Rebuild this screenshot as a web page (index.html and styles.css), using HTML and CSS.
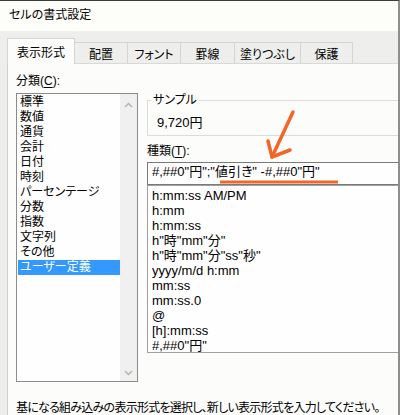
FILE: index.html
```html
<!DOCTYPE html>
<html lang="ja">
<head>
<meta charset="utf-8">
<title>セルの書式設定</title>
<link rel="stylesheet" href="styles.css">
</head>
<body>
<div class="window">
  <div class="titlebar">セルの書式設定</div>
  <div class="body">
    <div class="tabs">
      <div class="tab active t1">表示形式</div>
      <div class="tab t2">配置</div>
      <div class="tab t3">フォント</div>
      <div class="tab t4">罫線</div>
      <div class="tab t5">塗りつぶし</div>
      <div class="tab t6">保護</div>
    </div>
    <div class="panel">
      <div class="cols">
        <div class="left">
          <div class="label">分類(<u>C</u>):</div>
          <div class="listbox">
            <ul class="cats">
              <li>標準</li>
              <li>数値</li>
              <li>通貨</li>
              <li>会計</li>
              <li>日付</li>
              <li>時刻</li>
              <li>パーセンテージ</li>
              <li>分数</li>
              <li>指数</li>
              <li>文字列</li>
              <li>その他</li>
              <li class="selected">ユーザー定義</li>
            </ul>
            <div class="scrollbar">
              <svg class="chev" width="9" height="6" viewBox="0 0 9 6"><polyline points="1,5 4.5,1.5 8,5" fill="none" stroke="#b4b4b4" stroke-width="1.5"/></svg>
              <svg class="chev" width="9" height="6" viewBox="0 0 9 6"><polyline points="1,1 4.5,4.5 8,1" fill="none" stroke="#b4b4b4" stroke-width="1.5"/></svg>
            </div>
          </div>
        </div>
        <div class="right">
          <fieldset class="sample">
            <legend>サンプル</legend>
            <div class="sample-value">9,720円</div>
          </fieldset>
          <div class="label kind">種類(<u>T</u>):</div>
          <div class="input">#,##0"円";"値引き" -#,##0"円"</div>
          <ul class="formats">
            <li>h:mm:ss AM/PM</li>
            <li>h:mm</li>
            <li>h:mm:ss</li>
            <li>h"時"mm"分"</li>
            <li>h"時"mm"分"ss"秒"</li>
            <li>yyyy/m/d h:mm</li>
            <li>mm:ss</li>
            <li>mm:ss.0</li>
            <li>@</li>
            <li>[h]:mm:ss</li>
            <li>#,##0"円"</li>
          </ul>
        </div>
      </div>
      <p class="hint">基になる組み込みの表示形式を選択し、新しい表示形式を入力してください。</p>
    </div>
  </div>
  <svg class="annot" width="400" height="415" viewBox="0 0 400 415">
    <g stroke="#f0672a" stroke-width="3.5" fill="none" stroke-linecap="round" stroke-linejoin="round">
      <line x1="293" y1="112" x2="272" y2="157"/>
      <polyline points="268,141 272,157 290,150"/>
      <line x1="220" y1="182" x2="338" y2="182" stroke-width="3" stroke-linecap="butt"/>
    </g>
  </svg>
</div>
</body>
</html>
```

FILE: styles.css
```css
* { box-sizing: border-box; }
html, body { margin: 0; padding: 0; }
body {
  font-family: "Liberation Sans", "Noto Sans CJK JP", sans-serif;
  font-feature-settings: "palt";
  color: #000;
  background: #eeefec;
}
.window {
  position: relative;
  width: 400px;
  height: 415px;
  overflow: hidden;
  border-top: 1px solid #3c3c3c;
  border-right: 2px solid #8e8e8e;
  background: #eeefec;
}
.titlebar {
  height: 30px;
  background: #fdfdfa;
  padding-left: 9px;
  font-size: 12px;
  line-height: 28px;
}
.body {
  padding-top: 7px;
}
.tabs {
  display: flex;
  align-items: flex-end;
  height: 25px;
  padding-left: 7px;
  font-size: 12px;
}
.tab {
  height: 21px;
  border: 1px solid #d4d5d3;
  border-bottom: none;
  background: #eeefec;
  margin-left: -1px;
  display: flex;
  align-items: center;
  justify-content: center;
  padding-top: 1px;
  white-space: nowrap;
}
.tab.active {
  position: relative;
  z-index: 1;
  height: 26px;
  margin-bottom: -1px;
  margin-left: 0;
  background: #fcfcfa;
  padding-top: 0;
  padding-bottom: 1px;
}
.t1 { width: 68px; }
.t2 { width: 54px; }
.t3 { width: 54px; }
.t4 { width: 55px; }
.t5 { width: 67px; }
.t6 { width: 53px; }
.panel {
  margin-left: 7px;
  border-top: 1px solid #d9d9d7;
  border-left: 1px solid #d0d0ce;
  background: #fcfcfa;
  padding: 9px 0 0 8px;
  height: 400px;
}
.cols {
  display: grid;
  grid-template-columns: 122px 290px;
  column-gap: 9px;
  align-items: start;
}
.label {
  font-size: 12px;
  line-height: 16px;
  margin-bottom: 4px;
}
.label u { text-underline-offset: 2px; }
.listbox {
  height: 289px;
  border: 1px solid #8c8c8c;
  background: #fefefe;
  display: flex;
  padding: 1px 0 0 1px;
}
.cats {
  list-style: none;
  margin: 0;
  padding: 0;
  width: 102px;
  font-size: 12px;
}
.cats li {
  height: 15px;
  line-height: 15px;
  padding-left: 2px;
  white-space: nowrap;
}
.cats li.selected {
  background: #3399ff;
  color: #fff;
}
.scrollbar {
  width: 17px;
  margin-top: -1px;
  background: #f0f0f0;
  display: flex;
  flex-direction: column;
  justify-content: space-between;
  align-items: center;
  padding: 8px 0 5px;
}
.chev { display: block; }
.right {
  margin-top: 20px;
}
.sample {
  margin: 0;
  border: 1px solid #dcdcda;
  padding: 9px 0 5px 9px;
  min-width: 0;
}
.sample legend {
  font-size: 12px;
  line-height: 14px;
  padding: 0 2px;
  margin-left: -6px;
}
.sample-value {
  font-size: 13px;
  line-height: 14px;
}
.label.kind {
  margin-top: 8px;
  line-height: 14px;
  margin-bottom: 4px;
}
.input {
  height: 23px;
  border: 1px solid #7a7a7a;
  background: #fefefe;
  font-size: 13px;
  line-height: 16px;
  padding: 1px 0 0 4px;
  white-space: nowrap;
}
.formats {
  list-style: none;
  margin: 0;
  height: 168px;
  border: 1px solid #a0a0a0;
  background: #fefefe;
  padding: 2px 0 0 4px;
  font-size: 13px;
}
.formats li {
  height: 15px;
  line-height: 15px;
  white-space: nowrap;
}
.hint {
  margin: 18px 0 0;
  font-size: 12px;
  line-height: 16px;
  letter-spacing: -0.75px;
  white-space: nowrap;
}
.annot {
  position: absolute;
  left: 0;
  top: -1px;
  pointer-events: none;
}
```
